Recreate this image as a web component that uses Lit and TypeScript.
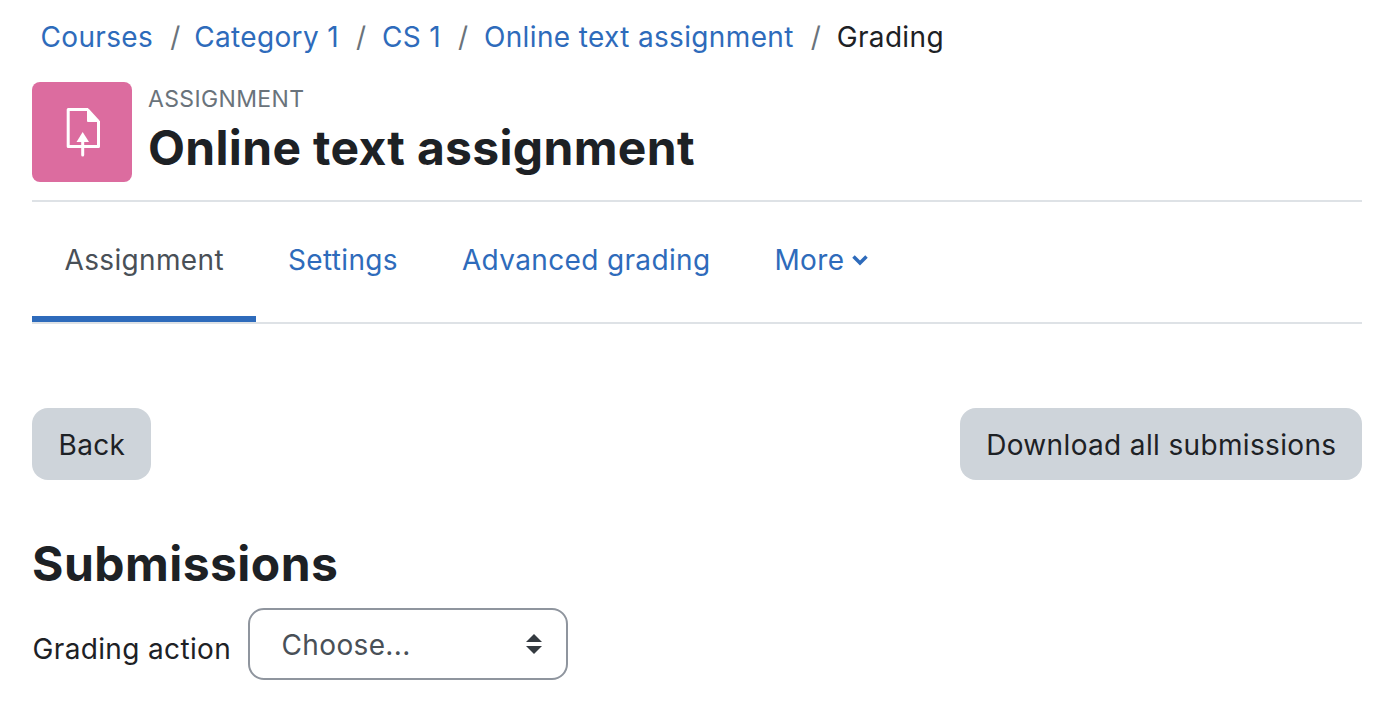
import { LitElement, css, html } from "lit";
import { customElement } from "lit/decorators.js";

@customElement("app-root")
export class AppRoot extends LitElement {
  static styles = css`
    :host {
      display: block;
      box-sizing: border-box;
      width: 1398px;
      height: 712px;
      padding: 0 36px 0 32px;
      background: #fff;
      font-family: Inter, "Liberation Sans", sans-serif;
      font-size: 28px;
      letter-spacing: 0.35px;
      color: #1d2125;
      overflow: hidden;
    }
    * {
      box-sizing: border-box;
      margin: 0;
    }
    a {
      color: #2e6bbb;
      text-decoration: none;
    }
    .crumbs {
      display: flex;
      align-items: center;
      height: 74px;
      padding-left: 8.5px;
    }
    .sep {
      color: #6a737b;
      margin: 0 15.5px 0 17px;
    }
    .sep.first {
      margin-right: 13.5px;
    }
    .head {
      display: flex;
      gap: 16px;
      height: 128px;
      padding-top: 8px;
      border-bottom: 2px solid #dee2e6;
    }
    .icon {
      display: flex;
      align-items: center;
      justify-content: center;
      width: 100px;
      height: 100px;
      border-radius: 8px;
      background: #dc6c9f;
    }
    .kicker {
      font-size: 23px;
      line-height: 34px;
      color: #6a737b;
    }
    h1 {
      font-size: 48px;
      font-weight: 700;
      line-height: 64px;
      letter-spacing: 0.33px;
    }
    .tabs {
      display: flex;
      height: 122px;
      border-bottom: 2px solid #dee2e6;
    }
    .tab {
      display: flex;
      align-items: center;
      gap: 8px;
      height: 120px;
      padding: 1px 32px 0;
      border-bottom: 6px solid transparent;
    }
    .tab.active {
      padding: 1px 32px 0 32.5px;
      color: #495057;
      border-bottom-color: #2e6bbb;
    }
    .actions {
      display: flex;
      justify-content: space-between;
      margin-top: 84px;
    }
    .btn {
      display: flex;
      align-items: center;
      height: 72px;
      padding: 2px 25.5px 0 26.5px;
      border-radius: 16px;
      background: #ced4da;
    }
    h2 {
      margin-top: 52px;
      font-size: 48px;
      font-weight: 700;
      line-height: 64px;
      letter-spacing: 0.45px;
    }
    .grading {
      display: flex;
      align-items: center;
      gap: 16.5px;
      margin-top: 12px;
    }
    .grading label {
      padding: 10px 0 0 0.5px;
    }
    .select {
      display: flex;
      align-items: center;
      justify-content: space-between;
      width: 320px;
      height: 72px;
      padding: 2px 24px 0 32px;
      border: 2px solid #8f959e;
      border-radius: 16px;
      color: #495057;
    }
    .select svg {
      margin-top: -2px;
    }
  `;

  render() {
    return html`
      <nav class="crumbs">
        <a href="#">Courses</a><span class="sep first">/</span>
        <a href="#">Category 1</a><span class="sep">/</span>
        <a href="#">CS 1</a><span class="sep">/</span>
        <a href="#">Online text assignment</a><span class="sep">/</span>
        <span>Grading</span>
      </nav>
      <header class="head">
        <div class="icon">
          <svg width="36" height="50" viewBox="0 0 36 50" fill="none" stroke="#fff" stroke-width="3" stroke-linejoin="round">
            <path d="M24 2.5H4.2V39.5H34.5V14" />
            <path d="M24 2.5V14H34.5Z" fill="#fff" stroke-width="2" />
            <path d="M18.7 25L25 35H12.5Z" fill="#fff" stroke="none" />
            <path d="M18.7 30V48" stroke-linecap="round" />
          </svg>
        </div>
        <div>
          <div class="kicker">ASSIGNMENT</div>
          <h1>Online text assignment</h1>
        </div>
      </header>
      <div class="tabs">
        <a class="tab active" href="#">Assignment</a>
        <a class="tab" href="#">Settings</a>
        <a class="tab" href="#">Advanced grading</a>
        <a class="tab" href="#">
          More
          <svg width="16" height="12" viewBox="0 0 16 12" fill="none" stroke="#2e6bbb" stroke-width="3.5">
            <path d="M1.5 2.5L8 9L14.5 2.5" />
          </svg>
        </a>
      </div>
      <div class="actions">
        <div class="btn">Back</div>
        <div class="btn">Download all submissions</div>
      </div>
      <h2>Submissions</h2>
      <div class="grading">
        <label>Grading action</label>
        <div class="select">
          Choose...
          <svg width="16" height="20" viewBox="0 0 16 20" fill="#343a40">
            <path d="M8 0L16 8H0Z" />
            <path d="M0 12H16L8 20Z" />
          </svg>
        </div>
      </div>
    `;
  }
}
